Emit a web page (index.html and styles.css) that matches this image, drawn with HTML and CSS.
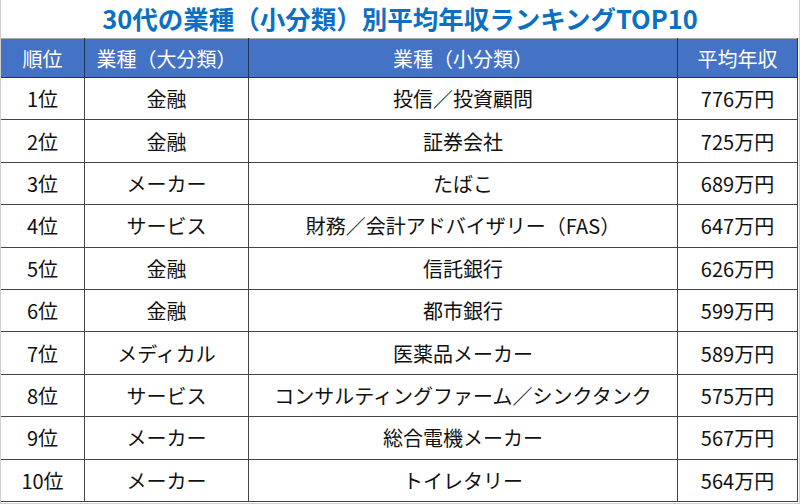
FILE: index.html
```html
<!DOCTYPE html>
<html lang="ja">
<head>
<meta charset="utf-8">
<link rel="stylesheet" href="styles.css">
</head>
<body>
<div class="frame">
  <h1 class="title">30代の業種（小分類）別平均年収ランキングTOP10</h1>
  <table class="rank">
    <colgroup>
      <col class="c1"><col class="c2"><col class="c3"><col class="c4">
    </colgroup>
    <thead>
      <tr><th>順位</th><th>業種（大分類）</th><th>業種（小分類）</th><th>平均年収</th></tr>
    </thead>
    <tbody>
      <tr><td>1位</td><td>金融</td><td>投信／投資顧問</td><td>776万円</td></tr>
      <tr><td>2位</td><td>金融</td><td>証券会社</td><td>725万円</td></tr>
      <tr><td>3位</td><td>メーカー</td><td>たばこ</td><td>689万円</td></tr>
      <tr><td>4位</td><td>サービス</td><td>財務／会計アドバイザリー（FAS）</td><td>647万円</td></tr>
      <tr><td>5位</td><td>金融</td><td>信託銀行</td><td>626万円</td></tr>
      <tr><td>6位</td><td>金融</td><td>都市銀行</td><td>599万円</td></tr>
      <tr><td>7位</td><td>メディカル</td><td>医薬品メーカー</td><td>589万円</td></tr>
      <tr><td>8位</td><td>サービス</td><td>コンサルティングファーム／シンクタンク</td><td>575万円</td></tr>
      <tr><td>9位</td><td>メーカー</td><td>総合電機メーカー</td><td>567万円</td></tr>
      <tr><td>10位</td><td>メーカー</td><td>トイレタリー</td><td>564万円</td></tr>
    </tbody>
  </table>
</div>
</body>
</html>
```
FILE: styles.css
```css
html, body {
  margin: 0;
  padding: 0;
  background: #ffffff;
}
.frame {
  box-sizing: border-box;
  width: 800px;
  height: 504px;
  border: 1px solid #cfcfcf;
  border-top: none;
  font-family: "Noto Sans CJK JP", "Noto Sans", sans-serif;
  overflow: hidden;
}
.title {
  margin: 0;
  height: 38px;
  line-height: 35px;
  text-align: center;
  font-size: 25.5px;
  font-weight: 700;
  color: #0b6fc3;
  letter-spacing: 0;
}
.rank {
  width: 797px;
  margin-left: -1px;
  border-collapse: collapse;
  table-layout: fixed;
}
.c1 { width: 84px; }
.c2 { width: 164px; }
.c3 { width: 429px; }
.c4 { width: 120px; }
.rank th {
  height: 38px;
  padding: 0;
  background: #4472c4;
  color: #ffffff;
  font-weight: 400;
  font-size: 20px;
  border: 1.5px solid #1e355e;
  border-top: 1px solid #a8a8a8;
}
.rank td {
  height: 41.4px;
  padding: 0;
  text-align: center;
  font-size: 20px;
  color: #111111;
  border: 1.5px solid #444444;
}
```
